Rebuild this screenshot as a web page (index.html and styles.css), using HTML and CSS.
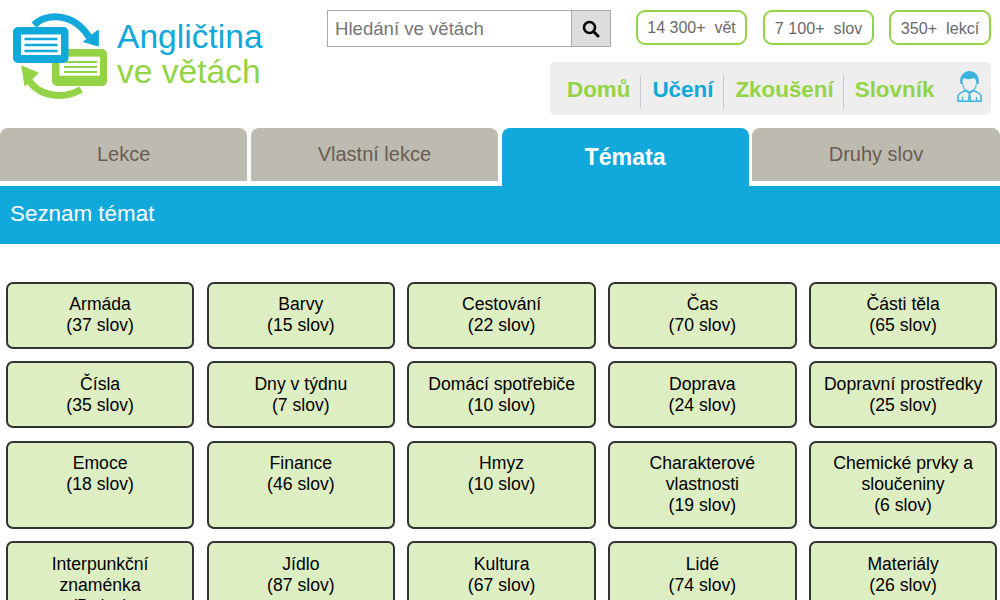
FILE: index.html
```html
<!DOCTYPE html>
<html lang="cs">
<head>
<meta charset="utf-8">
<title>Angličtina ve větách</title>
<link rel="stylesheet" href="styles.css">
</head>
<body>
<header class="header">
  <a class="logo">
    <svg class="logo-icon" width="100" height="90" viewBox="0 0 100 90">
      <path d="M21 12 C33 0 60 -1 76 24" fill="none" stroke="#11a8db" stroke-width="7"/>
      <path d="M70.500 28.700 L85.300 17 L85.300 33 Z" fill="#11a8db" stroke="#11a8db" stroke-width="1" stroke-linejoin="round"/>
      <path d="M14 64 C24 84 50 87 68 76.500" fill="none" stroke="#92d445" stroke-width="7"/>
      <path d="M8.700 53 L25.300 60 L12 73 Z" fill="#92d445" stroke="#92d445" stroke-width="1" stroke-linejoin="round"/>
      <rect x="39" y="36" width="55" height="37" rx="5" fill="#92d445"/>
      <rect x="46.500" y="43.700" width="40.500" height="19" fill="#fff"/>
      <path d="M53 49H84M51 54H84M51 59H84" stroke="#92d445" stroke-width="2.200"/>
      <rect x="0" y="14" width="55.500" height="36" rx="5" fill="#11a8db"/>
      <rect x="8" y="21.500" width="40" height="20.500" fill="#fff"/>
      <path d="M11.500 26H44.500M11.500 32H44.500M11.500 38H44.500" stroke="#11a8db" stroke-width="2.600"/>
    </svg>
    <span class="logo-text"><span class="logo-a">Angličtina</span><span class="logo-b">ve větách</span></span>
  </a>
  <div class="header-right">
    <div class="top-row">
      <form class="search">
        <input class="search-input" type="text" placeholder="Hledání ve větách">
        <button class="search-btn" type="button" aria-label="Hledat">
          <svg width="18" height="18" viewBox="0 0 18 18"><circle cx="7.500" cy="7.500" r="5.500" fill="none" stroke="#000" stroke-width="2.600"/><path d="M11.500 11.500L16 16" stroke="#000" stroke-width="3" stroke-linecap="round"/></svg>
        </button>
      </form>
      <div class="stats">
        <span class="stat stat-1">14 300+&nbsp; vět</span>
        <span class="stat stat-2">7 100+&nbsp; slov</span>
        <span class="stat stat-3">350+&nbsp; lekcí</span>
      </div>
    </div>
    <nav class="nav">
      <a class="nav-item">Domů</a>
      <a class="nav-item nav-blue">Učení</a>
      <a class="nav-item nav-tight">Zkoušení</a>
      <a class="nav-item nav-last">Slovník</a>
      <svg class="user" width="25" height="31" viewBox="0 0 25 31">
        <path d="M3.500 13 C1.500 4 8 0 12.500 0 C17 0 23.500 4 21.500 13 L19.500 13 C19.500 10 18.500 8 17 7 C13.500 8.500 9 8.500 6.500 7 C5.500 9 5.500 11 5.500 13 Z" fill="#3db2de"/>
        <path d="M5.500 12 C5.500 17 8.500 20.500 12.500 20.500 C16.500 20.500 19.500 17 19.500 12" fill="none" stroke="#5cc0e4" stroke-width="1.200"/>
        <path d="M1 30.300 V25 C1 22.500 4.500 21.500 8.500 19.500 L12.500 22 L16.500 19.500 C20.500 21.500 24 22.500 24 25 V30.300 Z" fill="none" stroke="#3db2de" stroke-width="1.500" stroke-linejoin="round"/>
        <path d="M12.500 22 L11.300 30 M12.500 22 L13.700 30 M5.500 26V30M19.500 26V30" stroke="#3db2de" stroke-width="1.300"/>
      </svg>
    </nav>
  </div>
</header>

<div class="tabs">
  <a class="tab">Lekce</a>
  <a class="tab">Vlastní lekce</a>
  <a class="tab tab-active">Témata</a>
  <a class="tab">Druhy slov</a>
</div>
<div class="band">Seznam témat</div>

<main class="grid">
  <a class="card">Armáda<br>(37 slov)</a>
  <a class="card">Barvy<br>(15 slov)</a>
  <a class="card">Cestování<br>(22 slov)</a>
  <a class="card">Čas<br>(70 slov)</a>
  <a class="card">Části těla<br>(65 slov)</a>
  <a class="card">Čísla<br>(35 slov)</a>
  <a class="card">Dny v týdnu<br>(7 slov)</a>
  <a class="card">Domácí spotřebiče<br>(10 slov)</a>
  <a class="card">Doprava<br>(24 slov)</a>
  <a class="card">Dopravní prostředky<br>(25 slov)</a>
  <a class="card">Emoce<br>(18 slov)</a>
  <a class="card">Finance<br>(46 slov)</a>
  <a class="card">Hmyz<br>(10 slov)</a>
  <a class="card">Charakterové vlastnosti<br>(19 slov)</a>
  <a class="card">Chemické prvky a sloučeniny<br>(6 slov)</a>
  <a class="card">Interpunkční znaménka<br>(5 slov)</a>
  <a class="card">Jídlo<br>(87 slov)</a>
  <a class="card">Kultura<br>(67 slov)</a>
  <a class="card">Lidé<br>(74 slov)</a>
  <a class="card">Materiály<br>(26 slov)</a>
</main>
</body>
</html>
```
FILE: styles.css
```css
* { box-sizing: border-box; }
html, body { margin: 0; padding: 0; }
body { font-family: "Liberation Sans", Arial, sans-serif; background: #fff; color: #000; }

.header { display: flex; justify-content: space-between; height: 128px; padding: 10px 9px 0 13px; }
.logo { display: flex; align-items: flex-start; }
.logo-icon { margin-top: 3px; flex: none; }
.logo-text { display: flex; flex-direction: column; margin-left: 4px; margin-top: 10px; font-size: 33.6px; line-height: 34px; }
.logo-a { color: #11a8db; }
.logo-b { color: #92d445; margin-top: 1px; }

.header-right { display: flex; flex-direction: column; align-items: flex-end; }
.top-row { display: flex; align-items: flex-start; }
.search { display: flex; height: 37px; margin-right: 25px; }
.search-input { width: 244px; height: 37px; border: 1px solid #a9a9a9; border-right: 0; padding: 0 7px; font: 18.6px "Liberation Sans", Arial, sans-serif; background: #fff; outline: 0; }
.search-input::placeholder { color: #757575; opacity: 1; }
.search-btn { width: 40px; height: 37px; padding: 0; border: 1px solid #a9a9a9; background: #ddd; display: flex; align-items: center; justify-content: center; }

.stats { display: flex; gap: 15px; }
.stat { display: block; height: 35px; border: 2px solid #92d445; border-radius: 9px; font-size: 16.2px; line-height: 32px; color: #6a6a6a; text-align: center; white-space: nowrap; }
.stat-1 { width: 111px; margin-right: 1px; font-size: 16px; }
.stat-2 { width: 111px; }
.stat-3 { width: 102px; }

.nav { display: flex; align-items: center; width: 441px; height: 53px; margin-top: 15px; background: #eee; border-radius: 5px; padding: 0 9px 0 6px; }
.nav-item { font-size: 22.4px; font-weight: bold; color: #92d445; padding: 0 10px 0 11px; height: 34px; margin-top: 6px; line-height: 29px; border-right: 1px solid #c9c9d2; }
.nav-blue { color: #11a8db; }
.nav-tight { padding-right: 9px; }
.nav-last { border-right: 0; }
.user { margin-left: auto; margin-bottom: 4px; flex: none; }

.tabs { display: flex; gap: 3.6px; height: 58px; }
.tab { flex: 0 0 247.2px; height: 53px; background: #bdbbb0; border-radius: 8px 8px 0 0; color: #6b5b53; font-size: 20px; line-height: 52px; text-align: center; }
.tab-active { height: 58px; background: #11a8db; color: #fff; font-size: 23.2px; font-weight: bold; line-height: 58px; }

.band { height: 58px; background: #11a8db; color: #fff; font-size: 22.4px; line-height: 56px; padding-left: 10px; }

.grid { display: grid; grid-template-columns: repeat(5, 1fr); gap: 12.6px 12.35px; padding: 38px 2.7px 0 5.9px; }
.card { display: block; background: #deeec3; border: 2px solid #333; border-radius: 7px; padding: 10.4px 4px 10.4px; font-size: 17.6px; line-height: 21px; text-align: center; color: #000; }
```
